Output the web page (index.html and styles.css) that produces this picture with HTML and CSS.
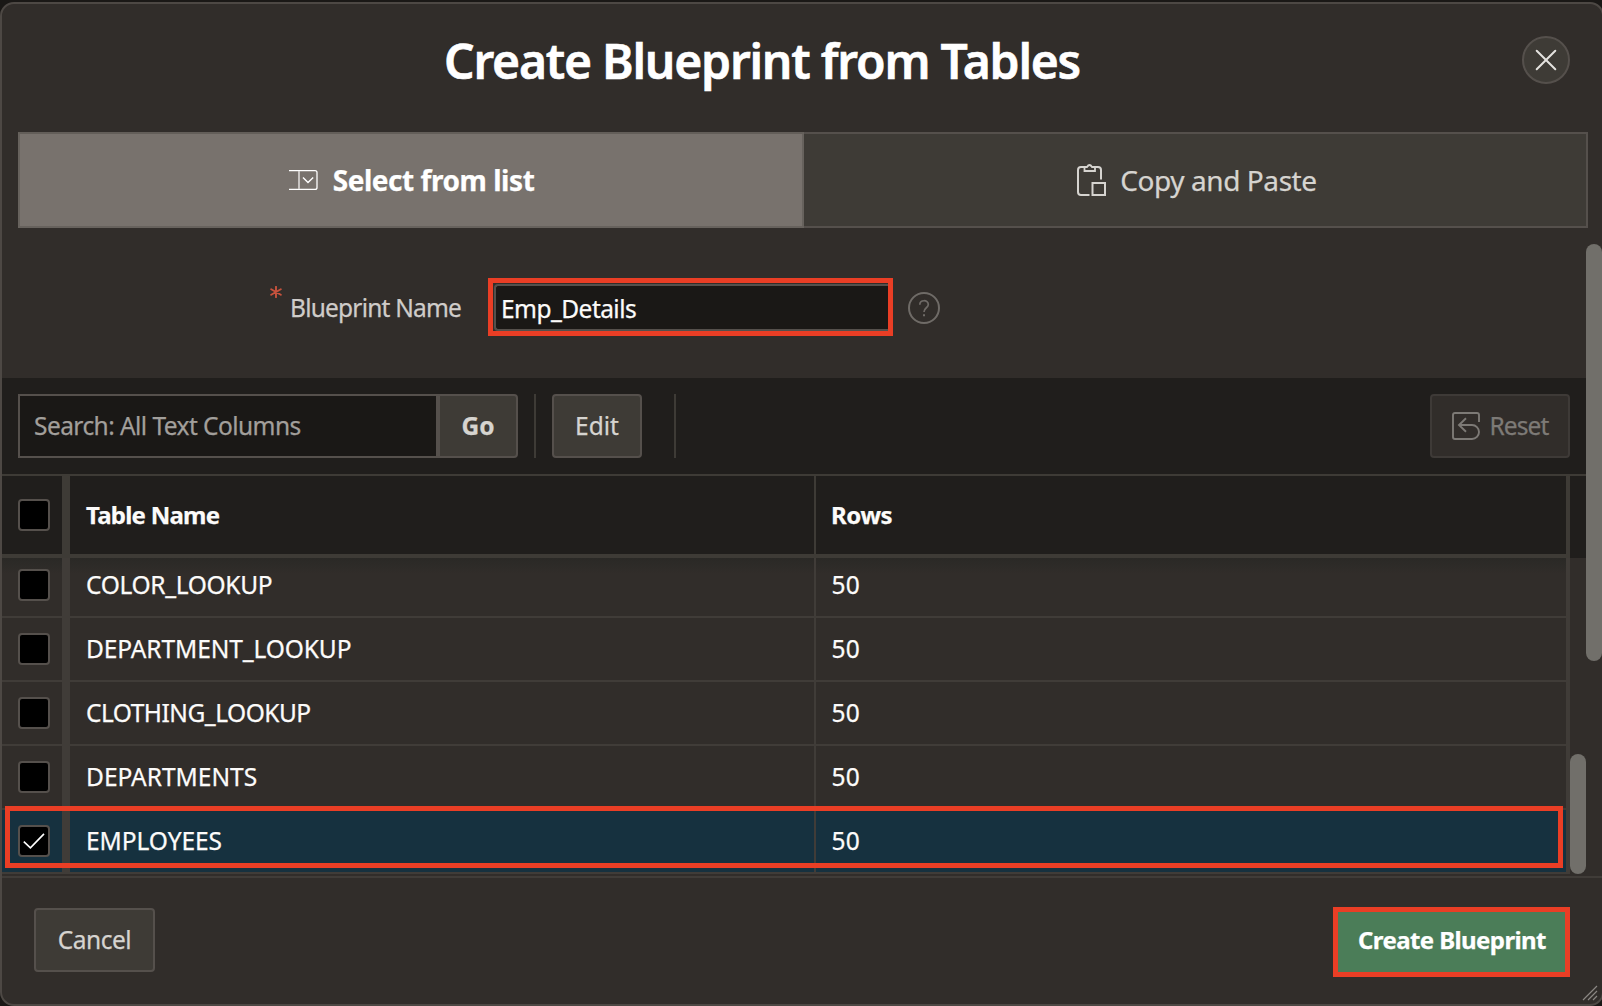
FILE: index.html
```html
<!DOCTYPE html>
<html lang="en">
<head>
<meta charset="utf-8">
<title>Create Blueprint from Tables</title>
<link rel="stylesheet" href="styles.css">
</head>
<body>
<div class="dialog" role="dialog" aria-labelledby="dialog-title">
  <header class="dialog-header">
    <h1 class="dialog-title" id="dialog-title">Create Blueprint from Tables</h1>
    <button class="close-button" type="button" aria-label="Close">
      <svg width="22" height="22" viewBox="0 0 22 22" fill="none" stroke="currentColor" stroke-width="2" stroke-linecap="round"><path d="M1.7 1.7 20.3 20.3M20.3 1.7 1.7 20.3"/></svg>
    </button>
  </header>

  <nav class="tabs">
    <button class="tab tab-active" type="button">
      <svg class="tab-icon" width="29" height="22" viewBox="0 0 29 22" fill="none"><path d="M0 1.6H26Q28 1.6 28 3.6V18.4Q28 20.4 26 20.4H0" stroke="#fff" stroke-width="1.3"/><path d="M10 2V20" stroke="#d2cfcc" stroke-width="1.8"/><path d="M14 8.5 19 13.6 24.2 8.5" stroke="#fff" stroke-width="1.4"/></svg>
      <span class="t-select">Select from list</span>
    </button>
    <button class="tab tab-copy" type="button">
      <svg class="tab-icon" width="29" height="32" viewBox="0 0 29 32" fill="none" stroke="currentColor" stroke-width="2"><path d="M12.5 31H4Q1 31 1 28V6Q1 3 4 3H8M17 3H21Q24 3 24 6V15.5"/><path d="M7.5 3H10Q12.5-1 15 3H18V7H7.5Z" stroke-width="1.8"/><path d="M15.5 19H28V31H15.5Z"/></svg>
      <span class="t-copy">Copy and Paste</span>
    </button>
  </nav>

  <div class="dialog-body">
    <main class="content">
      <section class="form-row">
        <svg class="required" width="12" height="12" viewBox="0 0 12 12" stroke="#c7523d" stroke-width="1.9" stroke-linecap="round"><path d="M6 .8V11.2M1.2 3.2 10.8 8.8M10.8 3.2 1.2 8.8"/></svg>
        <label class="field-label t-label" for="name">Blueprint Name</label>
        <div class="field-highlight"><div class="field" id="name"><span class="t-emp">Emp_Details</span></div></div>
        <svg class="help" width="32" height="32" viewBox="0 0 32 32" fill="none" stroke="#6f6b67" stroke-width="2"><circle cx="16" cy="16" r="15"/><path d="M11.8 12.8C11.8 7.4 20.3 7.4 20.3 12.6C20.3 16 16 15.6 16 20" stroke-width="1.7"/><path d="M16 22.3V24.3"/></svg>
      </section>

      <section class="toolbar">
        <div class="search-box"><span class="t-search">Search: All Text Columns</span></div>
        <button class="button button-go" type="button">Go</button>
        <span class="separator"></span>
        <button class="button button-edit" type="button">Edit</button>
        <span class="separator separator-wide"></span>
        <button class="button button-reset" type="button" disabled>
          <svg width="28" height="28" viewBox="0 0 28 28" fill="none" stroke="currentColor" stroke-width="1.9"><path d="M27 10V3Q27 1 25 1H3Q1 1 1 3V25Q1 27 3 27H20A6.9 6.9 0 0 0 20 13H7M14 6.3 7 13 14 19.7"/></svg>
          <span class="t-reset">Reset</span>
        </button>
      </section>

      <section class="grid">
        <div class="grid-main">
          <div class="row row-head">
            <div class="cell-check"><span class="checkbox"></span></div>
            <div class="cell"><span class="t-tname">Table Name</span></div>
            <div class="cell cell-rows"><span class="t-rows">Rows</span></div>
          </div>
          <div class="rows">
            <div class="row">
              <div class="cell-check"><span class="checkbox"></span></div>
              <div class="cell"><span class="t-color">COLOR_LOOKUP</span></div>
              <div class="cell cell-rows">50</div>
            </div>
            <div class="row">
              <div class="cell-check"><span class="checkbox"></span></div>
              <div class="cell"><span class="t-deplook">DEPARTMENT_LOOKUP</span></div>
              <div class="cell cell-rows">50</div>
            </div>
            <div class="row">
              <div class="cell-check"><span class="checkbox"></span></div>
              <div class="cell"><span class="t-cloth">CLOTHING_LOOKUP</span></div>
              <div class="cell cell-rows">50</div>
            </div>
            <div class="row">
              <div class="cell-check"><span class="checkbox"></span></div>
              <div class="cell"><span class="t-dep">DEPARTMENTS</span></div>
              <div class="cell cell-rows">50</div>
            </div>
            <div class="row row-selected">
              <div class="cell-check"><span class="checkbox"><svg width="24" height="18" viewBox="0 0 24 18" fill="none" stroke="#fff" stroke-width="1.6"><path d="M1.8 9.7 8.4 15.8 22 1.9"/></svg></span></div>
              <div class="cell"><span class="t-empl">EMPLOYEES</span></div>
              <div class="cell cell-rows">50</div>
            </div>
          </div>
        </div>
        <div class="grid-side">
          <div class="grid-side-head"></div>
          <div class="grid-thumb"></div>
        </div>
        <div class="row-highlight"></div>
      </section>
    </main>
    <div class="page-scroll"><div class="page-thumb"></div></div>
  </div>

  <footer class="dialog-footer">
    <button class="button button-cancel" type="button"><span class="t-cancel">Cancel</span></button>
    <button class="button-create" type="button"><span class="t-create">Create Blueprint</span></button>
  </footer>
  <svg class="grip" width="16" height="16" viewBox="0 0 16 16" stroke="#8b8783" stroke-width="1.2"><path d="M1 15 15 1M6 15 15 6M11 15 15 11"/></svg>
</div>
</body>
</html>
```

FILE: styles.css
```css
* { box-sizing: border-box; }

body {
  margin: 0;
  height: 1006px;
  padding-top: 2px;
  overflow: hidden;
  background: #1a1816;
  color: #fcfbfa;
  font: 24.5px/34px "Noto Sans", "Open Sans", sans-serif;
  -webkit-text-stroke: 0.25px currentColor;
}

button {
  margin: 0;
  padding: 0;
  border: 0;
  font: inherit;
  color: inherit;
}

svg { display: block; flex: none; }

.dialog {
  position: relative;
  display: flex;
  flex-direction: column;
  width: 1604px;
  height: 1004px;
  border: 2px solid #4d4844;
  border-radius: 14px;
  background: #312d2a;
  overflow: hidden;
}

/* Header */
.dialog-header {
  display: flex;
  align-items: flex-start;
  height: 128px;
  padding: 32px 32px 0 441px;
}
.dialog-title {
  margin: 0;
  padding: 1px 0 0 1px;
  flex: 1;
  font-size: 48px;
  line-height: 48px;
  font-weight: 600;
  letter-spacing: -1.23px;
  white-space: nowrap;
  color: #fff;
  -webkit-text-stroke-width: 0.6px;
}
.close-button {
  display: flex;
  align-items: center;
  justify-content: center;
  width: 48px;
  height: 48px;
  border: 2px solid #55504c;
  border-radius: 50%;
  background: #3e3b36;
  color: #e4e2df;
}

/* Tabs */
.tabs {
  display: flex;
  height: 96px;
  margin: 0 14px 0 16px;
}
.tab {
  display: flex;
  align-items: center;
  justify-content: center;
  gap: 15px;
  width: 784px;
  border: 2px solid #55504c;
  border-left: 0;
  background: #3e3b36;
  color: #d6d4d0;
  font-size: 28px;
}
.tab-active {
  width: 786px;
  padding-left: 1px;
  border: 2px solid #67625d;
  border-top-color: #635e59;
  background: #78726d;
  color: #fff;
  font-weight: 700;
}
.tab-copy {
  padding-left: 4px;
  gap: 14px;
}

/* Body */
.dialog-body { display: flex; height: 648px; }
.content { width: 1584px; }
.page-scroll { width: 16px; padding-top: 16px; }
.page-thumb {
  height: 417px;
  border-radius: 8px;
  background: #716f6a;
}

.form-row {
  display: flex;
  height: 150px;
  padding: 50px 0 0 268px;
}
.required { margin-top: 8px; }
.field-label {
  width: 206px;
  padding: 13px 0 0 8px;
  color: #cfccc9;
  white-space: nowrap;
}
.field-highlight {
  width: 405px;
  height: 58px;
  border: 5px solid #ea3e25;
  padding: 1px 0 0 1px;
}
.field {
  display: flex;
  align-items: center;
  height: 47px;
  padding: 2px 0 0 5px;
  border: 2px solid #55504c;
  border-right: 0;
  border-radius: 4px 0 0 4px;
  background: #1a1816;
}
.help { margin: 14px 0 0 15px; }

.toolbar {
  display: flex;
  height: 96px;
  padding: 16px;
  background: #201e1c;
}
.search-box {
  display: flex;
  align-items: center;
  width: 420px;
  padding-left: 14px;
  border: 2px solid #55504c;
  background: #1a1816;
  color: #a29f9b;
}
.button {
  display: flex;
  align-items: center;
  justify-content: center;
  height: 64px;
  border: 2px solid #55504c;
  border-radius: 4px;
  background: #3e3b36;
  color: #d6d4d0;
}
.button-go {
  width: 80px;
  border-radius: 0 4px 4px 0;
  font-weight: 700;
}
.separator {
  width: 2px;
  margin: 0 16px;
  background: #3e3b36;
}
.separator-wide { margin: 0 0 0 32px; }
.button-edit { width: 90px; }
.button-reset {
  width: 140px;
  margin-left: auto;
  gap: 10px;
  border-color: #3e3a37;
  background: #312d2a;
  color: #7d7a76;
}

/* Data grid */
.grid {
  position: relative;
  display: flex;
  height: 402px;
  border-top: 2px solid #3e3b36;
}
.grid-main { width: 1568px; }
.row {
  display: grid;
  grid-template-columns: 68px 746px 754px;
  height: 64px;
}
.row-head {
  height: 82px;
  background: #201e1c;
  font-size: 24px;
  font-weight: 700;
}
.row-head > div {
  border-bottom: 4px solid #3e3b36;
  border-right-color: #3e3b36;
}
.rows {
  height: 316px;
  overflow: hidden;
  background: linear-gradient(#2a2926, #312d2a 16px);
}
.rows .row:first-child { margin-top: -4px; }
.rows .row > div { border-bottom: 2px solid #403c38; }
.cell,
.cell-check {
  display: flex;
  align-items: center;
  border-right: 2px solid #403c38;
}
.cell { padding-left: 16px; }
.row .cell-rows {
  border-right-width: 4px;
  padding-left: 15px;
}
.rows .cell-rows {
  padding-left: 15.5px;
  letter-spacing: 0.3px;
}
.cell-check {
  padding-left: 16px;
  border-right-width: 8px;
}
.row-selected { background: #16313f; }
.checkbox {
  display: flex;
  align-items: center;
  justify-content: center;
  width: 32px;
  height: 32px;
  border: 2px solid #55504c;
  border-radius: 4px;
  background: #000;
}

.grid-side { width: 16px; }
.grid-side-head { height: 82px; background: #201e1c; }
.grid-thumb {
  height: 120px;
  margin-top: 196px;
  border-radius: 8px;
  background: #716f6a;
}

/* Marker frame drawn over the selected row */
.row-highlight {
  position: absolute;
  left: 3px;
  top: 330px;
  width: 1558px;
  height: 62px;
  border: 5px solid #ea3e25;
}

/* Footer */
.dialog-footer {
  display: flex;
  justify-content: space-between;
  align-items: flex-start;
  height: 128px;
  padding: 29px 32px 0;
  border-top: 2px solid #403c38;
}
.button-cancel { width: 121px; margin-top: 1px; }
.button-create {
  width: 237px;
  height: 70px;
  border: 5px solid #ea3e25;
  background: #4b7d58;
  color: #fff;
  font-size: 24px;
  font-weight: 700;
  line-height: 56px;
  padding: 0 0 4px 1px;
}
.grip {
  position: absolute;
  right: 4px;
  bottom: 3px;
}

/* Tracking per string */
.t-select { letter-spacing: -0.45px; }
.t-copy { letter-spacing: -0.43px; }
.t-label { letter-spacing: -0.79px; }
.t-emp { letter-spacing: -0.55px; }
.t-search { letter-spacing: -0.56px; }
.t-reset { letter-spacing: -0.9px; }
.t-tname { letter-spacing: -0.75px; }
.t-rows { letter-spacing: -0.4px; }
.t-color { letter-spacing: -0.33px; }
.t-deplook { letter-spacing: -0.1px; }
.t-cloth { letter-spacing: -0.5px; }
.t-dep { letter-spacing: 0; }
.t-empl { letter-spacing: -0.05px; }
.t-cancel { letter-spacing: -0.5px; }
.t-create { letter-spacing: -0.6px; }
```
